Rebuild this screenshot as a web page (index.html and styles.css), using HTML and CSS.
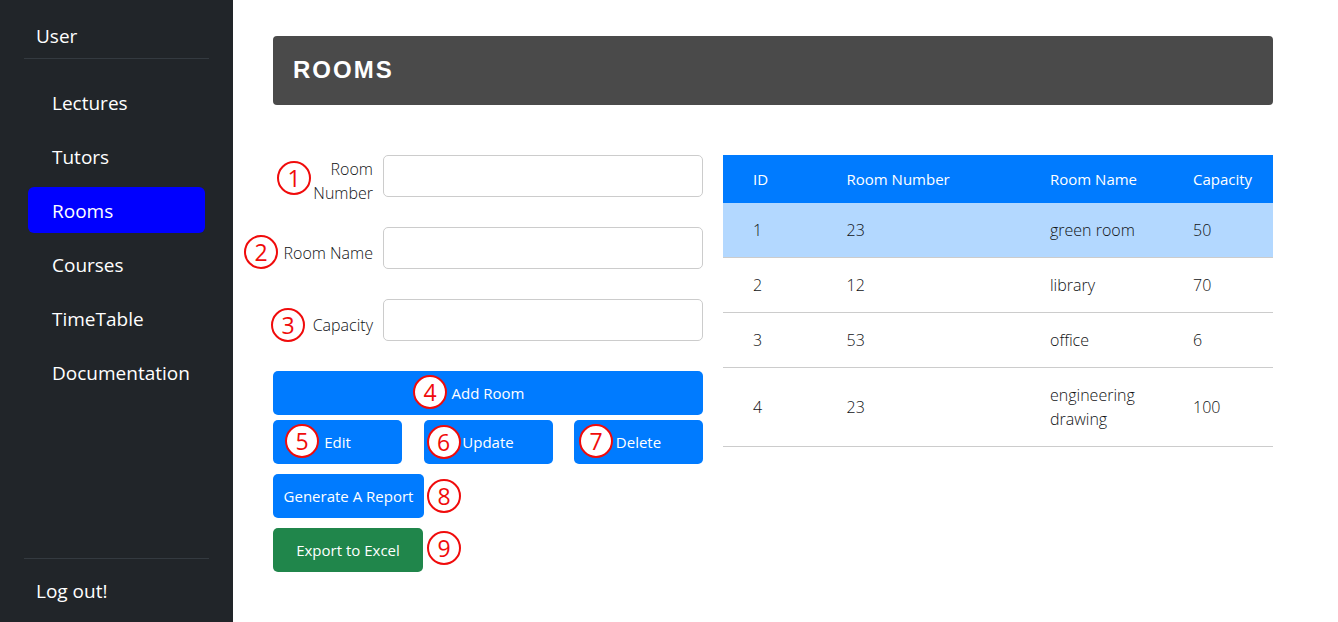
FILE: index.html
```html
<!DOCTYPE html>
<html lang="en">
<head>
<meta charset="utf-8">
<title>Rooms</title>
<link rel="stylesheet" href="styles.css">
</head>
<body>
<div class="layout">
  <aside class="sidebar">
    <a class="brand" href="#">User</a>
    <nav class="nav">
      <a class="nav-link" href="#">Lectures</a>
      <a class="nav-link" href="#">Tutors</a>
      <a class="nav-link active" href="#" aria-current="page">Rooms</a>
      <a class="nav-link" href="#">Courses</a>
      <a class="nav-link" href="#">TimeTable</a>
      <a class="nav-link" href="#">Documentation</a>
    </nav>
    <a class="logout" href="#">Log out!</a>
  </aside>
  <main class="main">
    <h1 class="title">ROOMS</h1>
    <div class="columns">
      <form class="form">
        <div class="field">
          <label class="field-label two-line" for="room-number">Room Number</label>
          <input class="field-input" id="room-number" type="text">
          <span class="badge badge-1">1</span>
        </div>
        <div class="field">
          <label class="field-label" for="room-name">Room Name</label>
          <input class="field-input" id="room-name" type="text">
          <span class="badge badge-2">2</span>
        </div>
        <div class="field">
          <label class="field-label" for="capacity">Capacity</label>
          <input class="field-input" id="capacity" type="text">
          <span class="badge badge-3">3</span>
        </div>
        <div class="slot">
          <button class="btn" type="button">Add Room</button>
          <span class="badge badge-4">4</span>
        </div>
        <div class="actions">
          <div class="slot action">
            <button class="btn" type="button">Edit</button>
            <span class="badge badge-5">5</span>
          </div>
          <div class="slot action">
            <button class="btn" type="button">Update</button>
            <span class="badge badge-6">6</span>
          </div>
          <div class="slot action">
            <button class="btn" type="button">Delete</button>
            <span class="badge badge-7">7</span>
          </div>
        </div>
        <div class="slot export">
          <button class="btn" type="button">Generate A Report</button>
          <span class="badge badge-8">8</span>
        </div>
        <div class="slot export">
          <button class="btn btn-excel" type="button">Export to Excel</button>
          <span class="badge badge-9">9</span>
        </div>
      </form>
      <table class="rooms">
        <thead>
          <tr><th class="col-id">ID</th><th class="col-number">Room Number</th><th class="col-name">Room Name</th><th class="col-capacity">Capacity</th></tr>
        </thead>
        <tbody>
          <tr class="selected"><td>1</td><td>23</td><td>green room</td><td>50</td></tr>
          <tr><td>2</td><td>12</td><td>library</td><td>70</td></tr>
          <tr><td>3</td><td>53</td><td>office</td><td>6</td></tr>
          <tr><td>4</td><td>23</td><td>engineering drawing</td><td>100</td></tr>
        </tbody>
      </table>
    </div>
  </main>
</div>
</body>
</html>
```
FILE: styles.css
```css
* { box-sizing: border-box; }

body {
  margin: 0;
  background: #fff;
  color: #101214;
  font: 300 16px/24px "Open Sans", "Noto Sans", sans-serif;
}

.layout { display: flex; min-height: 100vh; }

.sidebar {
  flex: 0 0 233px;
  min-width: 0;
  display: flex;
  flex-direction: column;
  padding: 14px 24px 8px;
  background: #212529;
  font-size: 19px;
  font-weight: 400;
}

.sidebar a { color: #fff; text-decoration: none; }

.brand {
  padding: 7px 12px;
  border-bottom: 1px solid #343a40;
  line-height: 30px;
}

.nav {
  flex: 1;
  display: flex;
  flex-direction: column;
  gap: 8px;
  padding: 20px 4px;
}

.nav-link {
  padding: 9px 12px 7px 24px;
  border-radius: 6px;
  line-height: 30px;
  white-space: nowrap;
}

.nav-link.active { background: #00f; }

.logout {
  padding: 17px 12px 8px;
  border-top: 1px solid #343a40;
  line-height: 30px;
}

.main { flex: 1; min-width: 0; padding: 36px 40px; }

.title {
  max-width: 1000px;
  margin: 0 0 50px;
  padding: 19px 20px 21px;
  border-radius: 4px;
  background: #4a4a4a;
  color: #fff;
  font: bold 24px/29px "Liberation Sans", Arial, sans-serif;
  letter-spacing: 2px;
}

.columns {
  display: grid;
  grid-template-columns: 430fr 550fr;
  gap: 20px;
  align-items: start;
  max-width: 1000px;
}

.field {
  position: relative;
  display: flex;
  align-items: flex-start;
  gap: 10px;
  height: 72px;
}

.field-label {
  flex: 0 0 100px;
  padding-top: 14px;
  text-align: right;
}

.field-label.two-line { padding: 2px 0 0 30px; }

.field-input {
  flex: 1;
  min-width: 0;
  height: 42px;
  padding: 8px 10px;
  border: 1px solid #ccc;
  border-radius: 5px;
  background: #fff;
  font: inherit;
}

.slot { position: relative; }

.actions {
  display: flex;
  justify-content: space-between;
  margin-top: 5px;
}

.action { width: 30%; }
.export { width: 151px; margin-top: 10px; }

.btn {
  display: block;
  width: 100%;
  padding: 10px 0;
  border: 0;
  border-radius: 5px;
  background: #007bff;
  color: #fff;
  font: 400 15px/24px "Open Sans", "Noto Sans", sans-serif;
  white-space: nowrap;
}

.btn-excel { width: 150px; background: #20864b; }

/* Numbered callouts laid over the form */
.badge {
  position: absolute;
  width: 34px;
  height: 34px;
  border: 2px solid #f00b0b;
  border-radius: 50%;
  background: #fff;
  color: #f00b0b;
  font-size: 23px;
  font-weight: 400;
  line-height: 30px;
  text-align: center;
}

.badge-1 { left: 4px; top: 6px; }
.badge-2 { left: -29px; top: 8px; }
.badge-3 { left: -2px; top: 9px; }
.badge-4 { left: 140px; top: 4px; }
.badge-5 { left: 12px; top: 4px; }
.badge-6 { left: 3px; top: 5px; }
.badge-7 { left: 5px; top: 4px; }
.badge-8 { left: 154px; top: 5px; }
.badge-9 { left: 154px; top: 3px; }

.rooms {
  width: 100%;
  border-collapse: separate;
  border-spacing: 0;
  table-layout: fixed;
}

.rooms th, .rooms td {
  padding: 15px 10px 15px 30px;
  text-align: left;
  vertical-align: middle;
}

.rooms th {
  padding-top: 12px;
  padding-bottom: 12px;
  background: #007bff;
  color: #fff;
  font-size: 15px;
  font-weight: 400;
}

.rooms td { border-bottom: 1px solid #ccc; }
.selected { background: #b3d8ff; }
.col-id { width: 17%; }
.col-number { width: 37%; }
.col-name { width: 26%; }
.col-capacity { width: 20%; }
```
